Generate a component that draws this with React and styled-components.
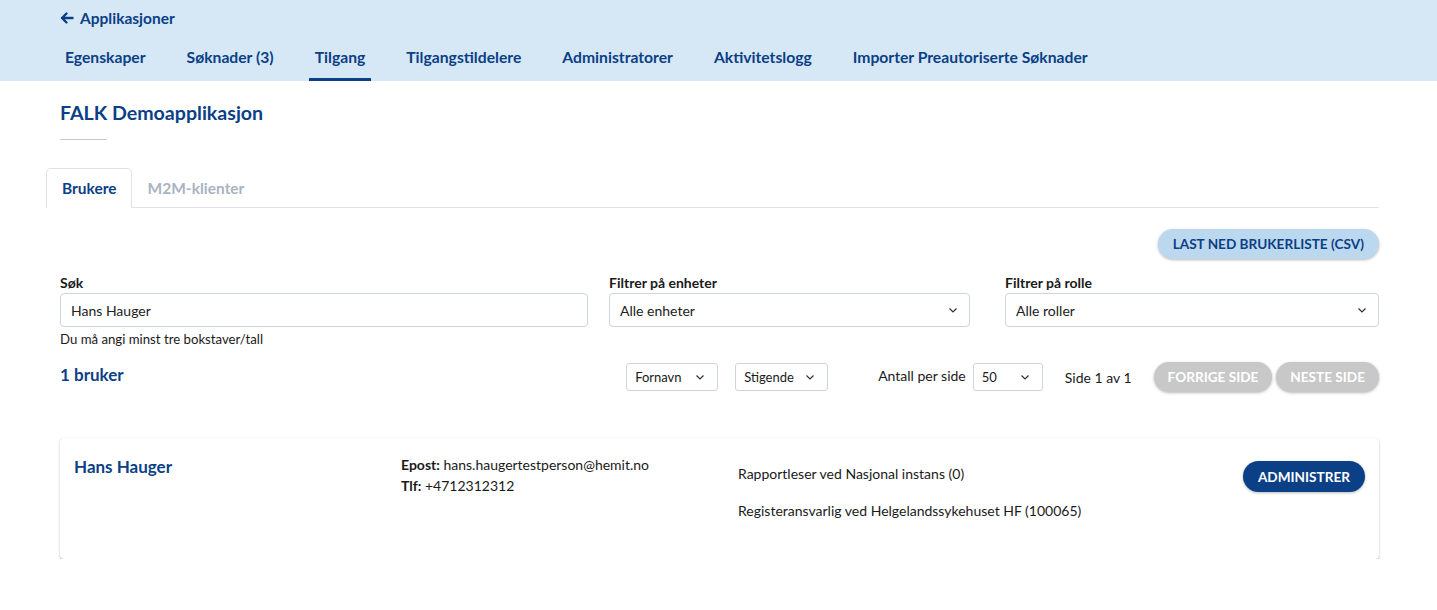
import React from 'react'
import styled, { createGlobalStyle } from 'styled-components'

const GlobalStyle = createGlobalStyle`
  body {
    margin: 0;
    font-family: Lato, "Liberation Sans", sans-serif;
    color: #1a1a1a;
    background: #fff;
  }
  * { box-sizing: border-box; }
`

const Header = styled.header`
  background: #d6e8f5;
  height: 81px;
  padding: 0 58px 0 60px;
  display: flex;
  flex-direction: column;
`

const BackLink = styled.a`
  display: flex;
  align-items: center;
  gap: 6px;
  height: 35px;
  color: #0b3f86;
  font-size: 15.5px;
  font-weight: 700;
  text-decoration: none;
`

const Nav = styled.nav`
  display: flex;
  gap: 29px;
  margin-left: -1px;
  margin-top: auto;
`

const NavItem = styled.a`
  display: flex;
  align-items: center;
  height: 45px;
  padding: 0 6px 0;
  color: #0b3f86;
  font-size: 15.7px;
  font-weight: 700;
  border-bottom: 3px solid ${p => (p.$active ? '#0b3f86' : 'transparent')};
`

const Main = styled.main`
  padding: 0 58px 0 60px;
`

const Title = styled.h1`
  margin: 0;
  padding-top: 20px;
  font-size: 19.6px;
  font-weight: 700;
  line-height: 24px;
  color: #0b3f86;
`

const TitleRule = styled.div`
  width: 47px;
  height: 1px;
  background: #c3cad4;
  margin-top: 14px;
`

const Tabs = styled.div`
  display: flex;
  margin: 28px 0 0 -14px;
  border-bottom: 1px solid #dfe3e8;
`

const Tab = styled.div`
  height: 39px;
  padding: 0 14px 0 15px;
  display: flex;
  align-items: center;
  font-size: 15.5px;
  font-weight: 700;
  color: ${p => (p.$active ? '#0b3f86' : '#a9b3c1')};
  background: #fff;
  border: 1px solid ${p => (p.$active ? '#dfe3e8' : 'transparent')};
  border-bottom: none;
  border-radius: 5px 5px 0 0;
  margin-bottom: -1px;
  ${p => p.$active && 'padding-bottom: 1px; height: 40px;'}
`

const Toolbar = styled.div`
  display: flex;
  justify-content: flex-end;
  margin-top: 21px;
`

const Pill = styled.button`
  height: ${p => p.$height || 30}px;
  padding: 0 ${p => p.$pad || 15}px;
  border: none;
  border-radius: 16px;
  font-family: inherit;
  font-size: 13.6px;
  font-weight: 700;
  cursor: pointer;
  background: ${p => p.$bg};
  color: ${p => p.$fg};
  box-shadow: 0 1px 3px rgba(0, 0, 0, 0.28);
`

const Filters = styled.div`
  display: grid;
  grid-template-columns: 549px 396px 1fr;
  margin-top: 16px;
`

const Field = styled.div`
  display: flex;
  flex-direction: column;
  width: ${p => p.$width || '100%'};
`

const Label = styled.label`
  font-size: 14px;
  font-weight: 700;
  line-height: 16px;
  margin-bottom: 2px;
`

const Input = styled.div`
  height: 34px;
  border: 1px solid #cfd4da;
  border-radius: 4px;
  padding: 0 10px;
  display: flex;
  align-items: center;
  justify-content: space-between;
  font-size: 14px;
  color: #222;
`

const Help = styled.div`
  font-size: 13.2px;
  line-height: 16px;
  margin-top: 4px;
`

const ListBar = styled.div`
  display: flex;
  align-items: center;
  margin-top: 15px;
  height: 30px;
`

const Count = styled.h2`
  margin: 0;
  font-size: 17px;
  font-weight: 700;
  color: #0b3f86;
  margin-right: auto;
  padding-bottom: 6px;
`

const SmallSelect = styled.div`
  width: ${p => p.$width}px;
  height: 28px;
  border: 1px solid #cfd4da;
  border-radius: 3px;
  display: flex;
  align-items: center;
  justify-content: space-between;
  padding: 0 11px 0 8px;
  font-size: 13px;
  margin-right: ${p => p.$gap || 0}px;
`

const Text = styled.span`
  font-size: 14px;
  margin-right: ${p => p.$gap || 0}px;
  padding-bottom: ${p => p.$raise || 0}px;
`

const Pager = styled.div`
  display: flex;
  gap: 4px;
`

const Card = styled.section`
  margin-top: 46px;
  height: 121px;
  background: #fff;
  border-radius: 4px;
  box-shadow: 0 1px 2px rgba(0, 0, 0, 0.3), 0 0 1px rgba(0, 0, 0, 0.08);
  display: grid;
  grid-template-columns: 327px 337px 1fr auto;
  padding: 19px 14px 0;
`

const Name = styled.h3`
  margin: 0;
  font-size: 17px;
  font-weight: 700;
  color: #0b3f86;
  line-height: 20px;
`

const Contact = styled.div`
  font-size: 14px;
  line-height: 21px;
  margin-top: -3px;
  b { font-weight: 700; }
`

const Roles = styled.div`
  display: flex;
  flex-direction: column;
  gap: 20px;
  font-size: 14px;
  line-height: 17px;
  padding-top: 8px;
`

const CardAction = styled.div`
  padding-top: 4px;
`

const Chevron = () => (
  <svg width="12" height="12" viewBox="0 0 12 12" fill="none" stroke="#333" strokeWidth="1.2">
    <path d="M2.5 4.5 6 8l3.5-3.5" />
  </svg>
)

const ArrowLeft = () => (
  <svg width="14" height="14" viewBox="0 0 14 14" fill="none" stroke="#0b3f86" strokeWidth="2.4" strokeLinecap="round" strokeLinejoin="round">
    <path d="M12.5 7H2M6.5 2.5 2 7l4.5 4.5" />
  </svg>
)

const tabs = ['Egenskaper', 'Søknader (3)', 'Tilgang', 'Tilgangstildelere', 'Administratorer', 'Aktivitetslogg', 'Importer Preautoriserte Søknader']

export default function App() {
  return (
    <>
      <GlobalStyle />
      <Header>
        <BackLink href="#"><ArrowLeft />Applikasjoner</BackLink>
        <Nav>
          {tabs.map(t => (
            <NavItem key={t} $active={t === 'Tilgang'}>{t}</NavItem>
          ))}
        </Nav>
      </Header>

      <Main>
        <Title>FALK Demoapplikasjon</Title>
        <TitleRule />

        <Tabs>
          <Tab $active>Brukere</Tab>
          <Tab>M2M-klienter</Tab>
        </Tabs>

        <Toolbar>
          <Pill $bg="#bcd8ee" $fg="#0b3f86">LAST NED BRUKERLISTE (CSV)</Pill>
        </Toolbar>

        <Filters>
          <Field $width="528px">
            <Label>Søk</Label>
            <Input>Hans Hauger</Input>
            <Help>Du må angi minst tre bokstaver/tall</Help>
          </Field>
          <Field $width="361px">
            <Label>Filtrer på enheter</Label>
            <Input>Alle enheter<Chevron /></Input>
          </Field>
          <Field>
            <Label>Filtrer på rolle</Label>
            <Input>Alle roller<Chevron /></Input>
          </Field>
        </Filters>

        <ListBar>
          <Count>1 bruker</Count>
          <SmallSelect $width={92} $gap={17}>Fornavn<Chevron /></SmallSelect>
          <SmallSelect $width={93} $gap={50}>Stigende<Chevron /></SmallSelect>
          <Text $gap={7} $raise={4}>Antall per side</Text>
          <SmallSelect $width={70} $gap={22}>50<Chevron /></SmallSelect>
          <Text $gap={22}>Side 1 av 1</Text>
          <Pager>
            <Pill $bg="#c8c8c8" $fg="#fff" $pad={14}>FORRIGE SIDE</Pill>
            <Pill $bg="#c8c8c8" $fg="#fff" $pad={14}>NESTE SIDE</Pill>
          </Pager>
        </ListBar>

        <Card>
          <Name>Hans Hauger</Name>
          <Contact>
            <div><b>Epost:</b> hans.haugertestperson@hemit.no</div>
            <div><b>Tlf:</b> +4712312312</div>
          </Contact>
          <Roles>
            <span>Rapportleser ved Nasjonal instans (0)</span>
            <span>Registeransvarlig ved Helgelandssykehuset HF (100065)</span>
          </Roles>
          <CardAction>
            <Pill $bg="#0b3f86" $fg="#fff" $height={31}>ADMINISTRER</Pill>
          </CardAction>
        </Card>
      </Main>
    </>
  )
}
